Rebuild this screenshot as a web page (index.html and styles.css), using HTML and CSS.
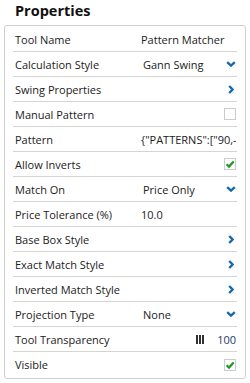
FILE: index.html
```html
<!DOCTYPE html>
<html>
<head>
<meta charset="utf-8">
<link rel="stylesheet" href="styles.css">
</head>
<body>
<h1 class="title">Properties</h1>
<div class="panel">
  <div class="row"><span class="label">Tool Name</span><span class="value">Pattern Matcher</span></div>
  <div class="row"><span class="label">Calculation Style</span><span class="value drop">Gann Swing</span><svg class="chev-down" viewBox="0 0 10 6"><path d="M1.2 1.2 L5 4.6 L8.8 1.2" /></svg></div>
  <div class="row"><span class="label">Swing Properties</span><span class="value"></span><svg class="chev-right" viewBox="0 0 6 9"><path d="M1.2 1 L4.6 4.5 L1.2 8" /></svg></div>
  <div class="row"><span class="label">Manual Pattern</span><span class="value"></span><span class="check"></span></div>
  <div class="row"><span class="label">Pattern</span><span class="value clip">{"PATTERNS":["90,-5","90,-5"]}</span></div>
  <div class="row"><span class="label">Allow Inverts</span><span class="value"></span><span class="check"><svg viewBox="0 0 10 10"><path d="M1.6 5.2 L4 7.6 L8.6 2.4" /></svg></span></div>
  <div class="row"><span class="label">Match On</span><span class="value drop">Price Only</span><svg class="chev-down" viewBox="0 0 10 6"><path d="M1.2 1.2 L5 4.6 L8.8 1.2" /></svg></div>
  <div class="row"><span class="label">Price Tolerance (%)</span><span class="value">10.0</span></div>
  <div class="row"><span class="label">Base Box Style</span><span class="value"></span><svg class="chev-right" viewBox="0 0 6 9"><path d="M1.2 1 L4.6 4.5 L1.2 8" /></svg></div>
  <div class="row"><span class="label">Exact Match Style</span><span class="value"></span><svg class="chev-right" viewBox="0 0 6 9"><path d="M1.2 1 L4.6 4.5 L1.2 8" /></svg></div>
  <div class="row"><span class="label">Inverted Match Style</span><span class="value"></span><svg class="chev-right" viewBox="0 0 6 9"><path d="M1.2 1 L4.6 4.5 L1.2 8" /></svg></div>
  <div class="row"><span class="label">Projection Type</span><span class="value drop">None</span><svg class="chev-down" viewBox="0 0 10 6"><path d="M1.2 1.2 L5 4.6 L8.8 1.2" /></svg></div>
  <div class="row"><span class="label">Tool Transparency</span><span class="value"></span><span class="slider"><span class="bars"><i></i><i></i><i></i></span><span class="num">100</span></span></div>
  <div class="row"><span class="label">Visible</span><span class="value"></span><span class="check"><svg viewBox="0 0 10 10"><path d="M1.6 5.2 L4 7.6 L8.6 2.4" /></svg></span></div>
</div>
</body>
</html>
```
FILE: styles.css
```css
html, body {
  margin: 0;
  padding: 0;
  background: #ffffff;
}
body {
  font-family: "Open Sans", "Liberation Sans", sans-serif;
  color: #222222;
  width: 250px;
}
.title {
  margin: 0;
  padding-left: 15px;
  font-size: 14.5px;
  font-weight: 700;
  line-height: 21px;
  height: 25px;
  color: #111111;
}
.panel {
  margin-left: 4px;
  width: 242px;
  box-sizing: border-box;
  border: 1px solid #cfcfcf;
  border-radius: 3px;
  padding: 1px 8px 1px 8px;
}
.row {
  display: flex;
  align-items: center;
  height: 25px;
  box-sizing: border-box;
  border-bottom: 1px solid #d4d4d4;
  font-size: 11px;
  padding-left: 2px;
  padding-right: 1px;
}
.row:last-child {
  border-bottom: none;
}
.label {
  width: 126px;
  flex: none;
  white-space: nowrap;
}
.value {
  flex: 1;
  min-width: 0;
  white-space: nowrap;
}
.value.drop {
  padding-left: 2px;
}
.value.clip {
  overflow: hidden;
}
.chev-down {
  width: 10px;
  height: 6px;
  flex: none;
}
.chev-down path, .chev-right path {
  fill: none;
  stroke: #1668b0;
  stroke-width: 2.4;
  stroke-linecap: butt;
  stroke-linejoin: miter;
}
.chev-right {
  width: 6px;
  height: 9px;
  flex: none;
  margin-right: 2px;
}
.check {
  width: 12px;
  height: 12px;
  box-sizing: border-box;
  border: 1px solid #cccccc;
  background: #ffffff;
  flex: none;
  display: flex;
  align-items: center;
  justify-content: center;
}
.check svg {
  width: 10px;
  height: 10px;
}
.check path {
  fill: none;
  stroke: #1e9a1e;
  stroke-width: 2.2;
}
.slider {
  display: flex;
  align-items: center;
  flex: none;
}
.bars {
  display: flex;
  gap: 1px;
  margin-right: 13px;
}
.bars i {
  display: block;
  width: 2px;
  height: 9px;
  background: #333333;
}
.num {
  color: #243a66;
}
```
